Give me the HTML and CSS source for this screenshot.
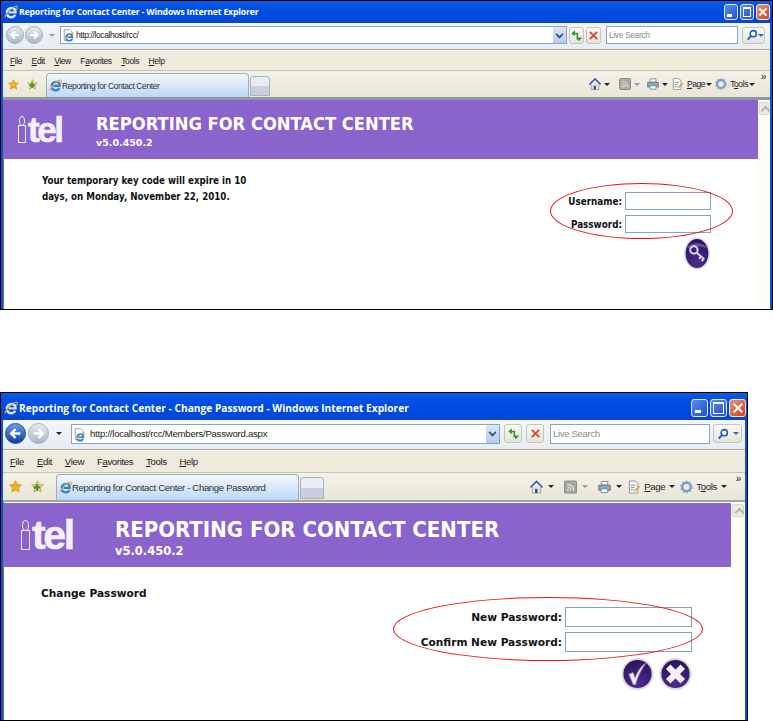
FILE: index.html
```html
<!DOCTYPE html>
<html lang="en">
<head>
    <meta charset="UTF-8">
    <meta name="viewport" content="width=device-width, initial-scale=1.0">
    <title>Reporting for Contact Center</title>
    <link rel="stylesheet" href="styles.css">
</head>
<body>
    <!-- shared icons -->
    <svg class="icon-defs" width="0" height="0">
        <defs>
            <radialGradient id="purple-ball" cx="0.5" cy="0.85" r="0.8">
                <stop offset="0" stop-color="#4d2c8c"/>
                <stop offset="1" stop-color="#2c1560"/>
            </radialGradient>
        </defs>
        <symbol id="i-ie" viewBox="0 0 16 16">
            <path d="M3.200 9.200C3.200 5.600 5.600 3.400 8.600 3.400 11.600 3.400 13.200 5.400 13.200 8.400H5.400M3.400 10.400C4 12.600 6 14 8.400 14 10.400 14 12 13 12.900 11.200" fill="none" stroke="currentColor" stroke-width="2.700"/>
            <path d="M1 14.200C2.800 9 9 2.400 13.600 1.400 15.600 1 15.800 3 14.400 5.400" fill="none" stroke="#e8a92c" stroke-width="1.300"/>
        </symbol>
        <symbol id="i-page" viewBox="0 0 12 14">
            <path d="M1.500 .5H8L11 3.500V13.500H1.500Z" fill="#fff" stroke="#8b97a6"/>
        </symbol>
        <symbol id="i-arrow-left" viewBox="0 0 20 20">
            <path d="M15 10H6M10 5.500 5.500 10 10 14.500" fill="none" stroke="#fff" stroke-width="2.600"/>
        </symbol>
        <symbol id="i-arrow-right" viewBox="0 0 20 20">
            <path d="M5 10H14M10 5.500 14.500 10 10 14.500" fill="none" stroke="#fff" stroke-width="2.600"/>
        </symbol>
        <symbol id="i-refresh" viewBox="0 0 16 16">
            <path d="M6 1.500 1.500 5.500 6 9V6.500H8V13H10V4.500H6ZM11 15 15 10.500H8Z" fill="#2f9a2f"/>
        </symbol>
        <symbol id="i-stop" viewBox="0 0 16 16">
            <path d="M3.500 3.500 12.500 12.500M12.500 3.500 3.500 12.500" fill="none" stroke="#d8483c" stroke-width="2.400"/>
        </symbol>
        <symbol id="i-search" viewBox="0 0 14 14">
            <circle cx="8.500" cy="5.500" r="3.600" fill="#fff" stroke="#1f55c8" stroke-width="1.800"/>
            <path d="M6 8 2 12.400" stroke="#1f55c8" stroke-width="2.200"/>
        </symbol>
        <symbol id="i-star" viewBox="0 0 14 14">
            <path d="M7 .8 8.900 4.900 13.300 5.400 10 8.400 10.900 12.900 7 10.600 3.100 12.900 4 8.400 .7 5.400 5.100 4.900Z" fill="#f6b21c" stroke="#c9800e" stroke-width=".7"/>
        </symbol>
        <symbol id="i-add" viewBox="0 0 14 14">
            <path d="M7 .8 8.900 4.900 13.300 5.400 10 8.400 10.900 12.900 7 10.600 3.100 12.900 4 8.400 .7 5.400 5.100 4.900Z" fill="#f3d67a" stroke="#b98b1c" stroke-width=".7"/>
            <path d="M3 8H10M6.500 4.500V11.500" stroke="#2f9a2f" stroke-width="2.400"/>
        </symbol>
        <symbol id="i-home" viewBox="0 0 14 14">
            <path d="M2.500 7V13.500H11.500V7" fill="#e8e4d8" stroke="#8a8f98" stroke-width=".8"/>
            <path d="M.5 7.500 7 1 13.500 7.500" fill="none" stroke="#2f5fb8" stroke-width="1.800"/>
            <path d="M5.500 9H8V13.500H5.500Z" fill="#234a94"/>
        </symbol>
        <symbol id="i-rss" viewBox="0 0 12 12">
            <rect x=".5" y=".5" width="11" height="11" rx="1" fill="#a9a9a4" stroke="#8e8e88"/>
            <path d="M3 3.500A5.500 5.500 0 0 1 8.800 9.200M3 6A3 3 0 0 1 6.200 9.200" fill="none" stroke="#ddd" stroke-width="1.100"/>
            <circle cx="3.600" cy="8.600" r="1" fill="#ddd"/>
        </symbol>
        <symbol id="i-print" viewBox="0 0 14 14">
            <path d="M3.500 1H10.500V5H3.500Z" fill="#f2f2f2" stroke="#7d8794"/>
            <path d="M.8 5H13.200V10.500H.8Z" fill="#9aa4b0" stroke="#68727e"/>
            <path d="M3.500 9H10.500V13H3.500Z" fill="#fff" stroke="#3f9aa8"/>
        </symbol>
        <symbol id="i-doc" viewBox="0 0 14 14">
            <path d="M1.500 .5H8L10.500 3V13.500H1.500Z" fill="#f7f7f2" stroke="#8c96a2"/>
            <path d="M3 5H8M3 7.500H7M3 10H6" stroke="#7b8ea8"/>
            <path d="M7 11.500 12.500 6" stroke="#d9a021" stroke-width="1.600"/>
        </symbol>
        <symbol id="i-gear" viewBox="0 0 14 14">
            <circle cx="7" cy="7" r="4.600" fill="none" stroke="#7d9cc0" stroke-width="2.600"/>
            <circle cx="7" cy="7" r="6" fill="none" stroke="#92a9c4" stroke-width="1.600" stroke-dasharray="2 1.800"/>
            <circle cx="7" cy="7" r="2.200" fill="#e7edf4"/>
        </symbol>
        <symbol id="i-key" viewBox="0 0 26 32">
            <ellipse cx="13" cy="16" rx="12.500" ry="15.500" fill="#d9d9dc"/>
            <ellipse cx="13" cy="16" rx="11" ry="14" fill="url(#purple-ball)"/>
            <path d="M3.500 11C6 4.500 20 4.500 22.500 11 17 8.500 9 8.500 3.500 11Z" fill="#6a51a0"/>
            <circle cx="10" cy="12.500" r="3.600" fill="none" stroke="#d8cfea" stroke-width="2"/>
            <path d="M12.500 15 20 21.500M17 19 15 21M19.500 21 17.500 23.500" fill="none" stroke="#d8cfea" stroke-width="2"/>
        </symbol>
        <symbol id="i-check" viewBox="0 0 34 34">
            <circle cx="17" cy="17" r="16.500" fill="#d9d9dc"/>
            <circle cx="17" cy="17" r="14.500" fill="url(#purple-ball)"/>
            <path d="M8 17 12.500 15.500 14.500 21C17 14 21 8.500 26 5.500 21 12 17 20 15 28H12.500Z" fill="#efeaf7" stroke="#8c75b8" stroke-width=".8"/>
        </symbol>
        <symbol id="i-cross" viewBox="0 0 34 34">
            <circle cx="17" cy="17" r="16.500" fill="#d9d9dc"/>
            <circle cx="17" cy="17" r="14.500" fill="url(#purple-ball)"/>
            <path d="M9.500 9.500 24.500 24.500M24.500 9.500 9.500 24.500" stroke="#f2eff8" stroke-width="6.500"/>
        </symbol>
    </svg>

    <section class="browser browser-login">
        <div class="titlebar">
            <svg class="title-icon"><use href="#i-ie"/></svg>
            <span class="title-text">Reporting for Contact Center - Windows Internet Explorer</span>
            <div class="win-buttons">
                <span class="win-btn win-min"></span>
                <span class="win-btn win-max"></span>
                <span class="win-btn win-close"></span>
            </div>
        </div>
        <div class="addressbar">
            <div class="nav-buttons">
                <span class="nav-ball nav-off"><svg><use href="#i-arrow-left"/></svg></span>
                <span class="nav-ball nav-off"><svg><use href="#i-arrow-right"/></svg></span>
                <span class="caret caret-grey"></span>
            </div>
            <div class="url-box">
                <svg class="url-icon"><use href="#i-page"/></svg>
                <svg class="url-ie"><use href="#i-ie"/></svg>
                <span class="url-text">http://localhost/rcc/</span>
                <span class="url-drop"></span>
            </div>
            <span class="tool-btn"><svg><use href="#i-refresh"/></svg></span>
            <span class="tool-btn"><svg><use href="#i-stop"/></svg></span>
            <div class="search-box">Live Search</div>
            <span class="search-btn"><svg><use href="#i-search"/></svg><span class="caret caret-blue"></span></span>
        </div>
        <nav class="menubar">
            <span><u>F</u>ile</span><span><u>E</u>dit</span><span><u>V</u>iew</span><span>F<u>a</u>vorites</span><span><u>T</u>ools</span><span><u>H</u>elp</span>
        </nav>
        <div class="tabbar">
            <svg class="fav-icon"><use href="#i-star"/></svg>
            <svg class="fav-icon fav-add"><use href="#i-add"/></svg>
            <div class="tab">
                <svg class="tab-icon"><use href="#i-ie"/></svg>
                <span>Reporting for Contact Center</span>
            </div>
            <span class="tab-new"></span>
            <div class="commands">
                <svg><use href="#i-home"/></svg><span class="caret"></span>
                <svg><use href="#i-rss"/></svg><span class="caret caret-grey"></span>
                <svg><use href="#i-print"/></svg><span class="caret"></span>
                <svg><use href="#i-doc"/></svg><span class="cmd-label"><u>P</u>age</span><span class="caret"></span>
                <svg><use href="#i-gear"/></svg><span class="cmd-label">T<u>o</u>ols</span><span class="caret"></span>
                <span class="chevron">»</span>
            </div>
        </div>
        <div class="viewport">
            <div class="page">
                <header class="banner">
                    <div class="logo"><span class="logo-i"></span><span class="logo-tel">tel</span></div>
                    <div class="banner-text">
                        <h1>REPORTING FOR CONTACT CENTER</h1>
                        <p>v5.0.450.2</p>
                    </div>
                </header>
                <div class="page-body">
                    <p class="message">Your temporary key code will expire in 10<br>days, on Monday, November 22, 2010.</p>
                    <form class="form">
                        <span class="ring"></span>
                        <div class="field"><label>Username:</label><span class="input"></span></div>
                        <div class="field"><label>Password:</label><span class="input"></span></div>
                        <div class="actions">
                            <svg class="round-btn key-btn"><use href="#i-key"/></svg>
                        </div>
                    </form>
                </div>
            </div>
            <div class="scrollbar"><span class="scroll-up"></span></div>
        </div>
    </section>

    <section class="browser browser-change">
        <div class="titlebar">
            <svg class="title-icon"><use href="#i-ie"/></svg>
            <span class="title-text">Reporting for Contact Center - Change Password - Windows Internet Explorer</span>
            <div class="win-buttons">
                <span class="win-btn win-min"></span>
                <span class="win-btn win-max"></span>
                <span class="win-btn win-close"></span>
            </div>
        </div>
        <div class="addressbar">
            <div class="nav-buttons">
                <span class="nav-ball nav-on"><svg><use href="#i-arrow-left"/></svg></span>
                <span class="nav-ball nav-off"><svg><use href="#i-arrow-right"/></svg></span>
                <span class="caret"></span>
            </div>
            <div class="url-box">
                <svg class="url-icon"><use href="#i-page"/></svg>
                <svg class="url-ie"><use href="#i-ie"/></svg>
                <span class="url-text">http://localhost/rcc/Members/Password.aspx</span>
                <span class="url-drop"></span>
            </div>
            <span class="tool-btn"><svg><use href="#i-refresh"/></svg></span>
            <span class="tool-btn"><svg><use href="#i-stop"/></svg></span>
            <div class="search-box">Live Search</div>
            <span class="search-btn"><svg><use href="#i-search"/></svg><span class="caret caret-blue"></span></span>
        </div>
        <nav class="menubar">
            <span><u>F</u>ile</span><span><u>E</u>dit</span><span><u>V</u>iew</span><span>F<u>a</u>vorites</span><span><u>T</u>ools</span><span><u>H</u>elp</span>
        </nav>
        <div class="tabbar">
            <svg class="fav-icon"><use href="#i-star"/></svg>
            <svg class="fav-icon fav-add"><use href="#i-add"/></svg>
            <div class="tab">
                <svg class="tab-icon"><use href="#i-ie"/></svg>
                <span>Reporting for Contact Center - Change Password</span>
            </div>
            <span class="tab-new"></span>
            <div class="commands">
                <svg><use href="#i-home"/></svg><span class="caret"></span>
                <svg><use href="#i-rss"/></svg><span class="caret caret-grey"></span>
                <svg><use href="#i-print"/></svg><span class="caret"></span>
                <svg><use href="#i-doc"/></svg><span class="cmd-label"><u>P</u>age</span><span class="caret"></span>
                <svg><use href="#i-gear"/></svg><span class="cmd-label">T<u>o</u>ols</span><span class="caret"></span>
                <span class="chevron">»</span>
            </div>
        </div>
        <div class="viewport">
            <div class="page">
                <header class="banner">
                    <div class="logo"><span class="logo-i"></span><span class="logo-tel">tel</span></div>
                    <div class="banner-text">
                        <h1>REPORTING FOR CONTACT CENTER</h1>
                        <p>v5.0.450.2</p>
                    </div>
                </header>
                <div class="page-body">
                    <p class="message">Change Password</p>
                    <form class="form">
                        <span class="ring"></span>
                        <div class="field"><label>New Password:</label><span class="input"></span></div>
                        <div class="field"><label>Confirm New Password:</label><span class="input"></span></div>
                        <div class="actions">
                            <svg class="round-btn"><use href="#i-check"/></svg>
                            <svg class="round-btn"><use href="#i-cross"/></svg>
                        </div>
                    </form>
                </div>
            </div>
            <div class="scrollbar"><span class="scroll-up"></span></div>
        </div>
    </section>
</body>
</html>
```

FILE: styles.css
```css
/* Base Styles */
* {
    margin: 0;
    padding: 0;
    box-sizing: border-box;
}

body {
    background: #fff;
    color: #111;
    font-family: "DejaVu Sans", sans-serif;
    overflow: hidden;
}

.icon-defs {
    position: absolute;
}

svg {
    display: block;
    flex: none;
    color: #2f7fd6;
}

/* Window frame, sizes differ per screenshot */
.browser {
    display: flex;
    flex-direction: column;
    border: 1px solid #000;
    background: #0a52dc;
    --edge: 2px;
}

.browser-login {
    width: 773px;
    height: 310px;
    margin-bottom: 82px;
    --title-h: 22px;
    --address-h: 27px;
    --menu-h: 21px;
    --tab-h: 29px;
    --ui-font: 8.5px;
    --ui-track: -.4px;
}

.browser-change {
    width: 748px;
    height: 329px;
    --title-h: 27px;
    --address-h: 30px;
    --menu-h: 23px;
    --tab-h: 29px;
    --ui-font: 9.6px;
    --ui-track: -.35px;
}

/* Title bar */
.titlebar {
    height: var(--title-h);
    display: flex;
    align-items: center;
    color: #fff;
    font-family: "Open Sans", sans-serif;
    font-weight: 700;
    white-space: nowrap;
    background: linear-gradient(180deg, #0b5fe0, #0150e6 25%, #0048dc 80%, #0a46c4);
}

.browser-login .titlebar {
    font-size: 8.7px;
    letter-spacing: -.17px;
    padding: 0 2px 0 3px;
}

.browser-change .titlebar {
    font-size: 10.2px;
    padding: 2px 1px 0 3px;
}

.title-icon {
    width: 14px;
    height: 14px;
    margin-right: 1px;
    color: #cfe6ff;
}

.win-buttons {
    display: flex;
    gap: 2px;
    margin-left: auto;
}

.win-btn {
    position: relative;
    display: block;
    border: 1px solid #dfe8fb;
    border-radius: 3px;
    background: linear-gradient(135deg, #5b8cf0, #2350c8);
}

.browser-login .win-btn {
    width: 14px;
    height: 16px;
}

.browser-change .win-btn {
    width: 17px;
    height: 18px;
}

.win-min::after {
    content: "";
    position: absolute;
    left: 20%;
    bottom: 15%;
    width: 38%;
    height: 3px;
    background: #fff;
}

.win-max::after {
    content: "";
    position: absolute;
    inset: 2px;
    border: 1px solid #fff;
    border-top-width: 2px;
}

.win-close {
    background: linear-gradient(135deg, #ec9478, #d2401a);
}

.win-close::before,
.win-close::after {
    content: "";
    position: absolute;
    left: 10%;
    right: 10%;
    top: 44%;
    height: 2px;
    background: #fff;
    transform: rotate(45deg);
}

.win-close::after {
    transform: rotate(-45deg);
}

/* Address row */
.addressbar {
    height: var(--address-h);
    display: flex;
    align-items: center;
    margin: 0 var(--edge);
    border-bottom: 1px solid #a8a99c;
    background: linear-gradient(180deg, #f2f5fa, #e8edf3);
}

.browser-login .addressbar {
    padding: 0 3px 2px 3px;
}

.browser-change .addressbar {
    padding: 0 2px 2px 2px;
}

.nav-buttons {
    display: flex;
    align-items: center;
}

.nav-ball {
    display: block;
    border-radius: 50%;
    border: 1px solid #a7b0bd;
}

.nav-ball svg {
    width: 100%;
    height: 100%;
}

.nav-on {
    background: linear-gradient(180deg, #6f9be6, #0f3f9c);
    border-color: #1d4d9f;
}

.nav-off {
    background: linear-gradient(180deg, #e6ebf2, #a9b6c8);
}

.browser-login .nav-ball {
    width: 18px;
    height: 18px;
}

.browser-login .nav-buttons {
    gap: 1px;
    width: 54px;
}

.browser-change .nav-ball {
    width: 21px;
    height: 21px;
}

.browser-change .nav-buttons {
    gap: 2px;
    width: 66px;
}

.nav-buttons .caret {
    margin-left: 5px;
}

.caret {
    display: block;
    width: 0;
    height: 0;
    border: 3px solid transparent;
    border-top: 3px solid #222;
    border-bottom: 0;
    flex: none;
}

.caret-grey {
    border-top-color: #9a9a9a;
}

.caret-blue {
    border-top-color: #2c62c8;
}

.url-box,
.search-box,
.menubar,
.tabbar {
    font-family: "Liberation Sans", sans-serif;
    font-size: var(--ui-font);
    letter-spacing: var(--ui-track);
}

.url-box,
.search-box {
    display: flex;
    align-items: center;
    border: 1px solid #8aa4bf;
    background: #fff;
}

.url-box {
    position: relative;
    color: #222;
}

.browser-login .url-box {
    width: 507px;
    height: 18px;
    padding-left: 2px;
}

.browser-change .url-box {
    width: 429px;
    height: 20px;
    padding-left: 2px;
    letter-spacing: -.25px;
}

.url-icon {
    width: 10px;
    height: 12px;
}

.url-ie {
    position: absolute;
    left: 3px;
    bottom: 1px;
    width: 10px;
    height: 10px;
}

.url-text {
    margin-left: 3px;
}

.browser-change .url-text {
    margin-left: 6px;
}

.url-drop {
    position: relative;
    margin-left: auto;
    width: 13px;
    height: 100%;
    background: linear-gradient(180deg, #dbe6f8, #b5cbee);
}

.url-drop::after {
    content: "";
    position: absolute;
    left: 3px;
    top: 4px;
    width: 5px;
    height: 5px;
    border-right: 2px solid #3b4d6a;
    border-bottom: 2px solid #3b4d6a;
    transform: rotate(45deg) scale(.8);
}

.tool-btn {
    display: flex;
    align-items: center;
    justify-content: center;
    border: 1px solid #c6c6b8;
    border-radius: 3px;
    background: linear-gradient(180deg, #fafaf5, #e4e4da);
}

.tool-btn svg {
    width: 13px;
    height: 13px;
}

.browser-login .tool-btn {
    width: 15px;
    height: 17px;
    margin-left: 2px;
}

.browser-change .tool-btn {
    width: 18px;
    height: 19px;
    margin-left: 4px;
}

.search-box {
    color: #8c8c8c;
    padding-left: 2px;
}

.browser-login .search-box {
    width: 132px;
    height: 18px;
    margin-left: 5px;
}

.browser-change .search-box {
    width: 160px;
    height: 20px;
    margin-left: 6px;
}

.search-btn {
    display: flex;
    align-items: center;
    justify-content: space-between;
    padding: 0 2px 0 3px;
    border: 1px solid #c6c6b8;
    border-radius: 3px;
    background: linear-gradient(180deg, #fafaf5, #e4e4da);
}

.search-btn svg {
    width: 12px;
    height: 12px;
}

.browser-login .search-btn {
    width: 23px;
    height: 17px;
    margin-left: 4px;
}

.browser-change .search-btn {
    width: 29px;
    height: 19px;
    margin-left: 3px;
}

/* Menu row */
.menubar {
    height: var(--menu-h);
    display: flex;
    align-items: center;
    margin: 0 var(--edge);
    border-top: 1px solid #f7f6ee;
    border-bottom: 1px solid #c4c3b4;
    background: #eeebdd;
    color: #222;
}

.browser-login .menubar {
    padding-left: 7px;
    gap: 9.5px;
}

.browser-change .menubar {
    padding-left: 7px;
    gap: 12.8px;
}

/* Tab row */
.tabbar {
    height: var(--tab-h);
    display: flex;
    align-items: flex-end;
    margin: 0 var(--edge);
    background: linear-gradient(180deg, #f4f2e8, #e9e6d7);
    color: #333;
    white-space: nowrap;
}

.browser-login .tabbar {
    border-bottom: 3px solid #8f99a6;
}

.browser-change .tabbar {
    border-bottom: 2px solid #9aa5b2;
}

.fav-icon {
    align-self: center;
}

.browser-login .fav-icon {
    width: 11px;
    height: 11px;
    margin-left: 5px;
}

.browser-login .fav-icon.fav-add {
    margin: 0 8px;
}

.browser-change .fav-icon {
    width: 13px;
    height: 13px;
    margin-left: 6px;
}

.browser-change .fav-icon.fav-add {
    margin: 0 12px 0 9px;
}

.tab {
    display: flex;
    align-items: center;
    border: 1px solid #a3adb8;
    border-bottom: 0;
    border-radius: 4px 4px 0 0;
    background: linear-gradient(180deg, #f4f8fd, #bcd8f7);
}

.tab-icon {
    width: 13px;
    height: 13px;
    margin: 0 0 0 2px;
}

.browser-login .tab {
    width: 203px;
    height: 24px;
}

.browser-change .tab {
    width: 243px;
    height: 26px;
}

.tab-new {
    display: block;
    margin-left: 1px;
    margin-bottom: 1px;
    border: 1px solid #aab2bd;
    border-radius: 3px 3px 0 0;
    background: linear-gradient(180deg, #e8ecf5 50%, #c9cfe0 50%);
}

.browser-login .tab-new {
    width: 20px;
    height: 20px;
}

.browser-change .tab-new {
    width: 24px;
    height: 22px;
}

/* Command buttons, gaps are not even in IE7 */
.commands {
    align-self: center;
    position: relative;
    display: flex;
    align-items: center;
    margin-left: auto;
    color: #222;
}

.browser-login .commands {
    gap: 3px;
    padding-right: 15px;
}

.browser-login .commands svg {
    width: 12px;
    height: 12px;
}

.browser-login .commands svg:nth-of-type(2) {
    margin-left: 6px;
}

.browser-login .commands svg:nth-of-type(3) {
    margin-left: 4px;
}

.browser-login .commands svg:nth-of-type(4) {
    margin-left: 1px;
}

.browser-login .commands .cmd-label + .caret {
    margin-left: -2px;
}

.browser-change .commands {
    gap: 5px;
    padding-right: 18px;
}

.browser-change .commands svg {
    width: 13px;
    height: 14px;
}

.browser-change .commands svg:nth-of-type(2),
.browser-change .commands svg:nth-of-type(3) {
    margin-left: 5px;
}

.browser-change .commands svg:nth-of-type(4) {
    margin-left: 1px;
}

.browser-change .commands .cmd-label {
    margin-left: -2px;
}

.browser-change .commands .cmd-label + .caret {
    margin-left: -1px;
}

.chevron {
    position: absolute;
    right: 4px;
    top: -6px;
    font-size: 10px;
    line-height: 10px;
}

/* Page area */
.viewport {
    flex: 1;
    min-height: 0;
    display: flex;
    margin: 0 var(--edge);
    background: #fff;
}

.page {
    flex: 1;
    display: flex;
    flex-direction: column;
    border-left: 1px solid #777;
}

.banner {
    display: flex;
    background: #8a63cd;
    color: #fff;
}

.browser-login .banner {
    height: 59px;
}

.browser-change .banner {
    height: 64px;
    margin-top: 1px;
}

.logo {
    display: flex;
    align-items: flex-end;
    font-family: "Liberation Sans", sans-serif;
    font-weight: 700;
}

.browser-login .logo {
    width: 92px;
    padding: 0 0 16px 14px;
}

.browser-change .logo {
    width: 111px;
    padding: 0 0 17px 17px;
}

.logo-i {
    position: relative;
    display: block;
    flex: none;
    border: 1px solid #eee;
    margin-right: 2px;
}

.logo-i::before {
    content: "";
    position: absolute;
    left: 0;
    right: 0;
    border: 1px solid #eee;
    border-radius: 50%;
}

.browser-login .logo-i {
    width: 8px;
    height: 18px;
}

.browser-login .logo-i::before {
    height: 8px;
    top: -10px;
}

.browser-change .logo-i {
    width: 9px;
    height: 20px;
}

.browser-change .logo-i::before {
    height: 9px;
    top: -11px;
}

.logo-tel {
    color: #f4f0fb;
    -webkit-text-stroke: .6px #f4f0fb;
    line-height: .74;
}

.browser-login .logo-tel {
    font-size: 35px;
    letter-spacing: -2.4px;
}

.browser-change .logo-tel {
    font-size: 41px;
    letter-spacing: -2.4px;
}

.banner-text h1 {
    font-family: "DejaVu Sans Condensed", "DejaVu Sans", sans-serif;
    font-stretch: condensed;
    font-weight: 700;
    white-space: nowrap;
    line-height: 1;
}

.banner-text p {
    font-weight: 700;
}

.browser-login .banner-text {
    padding-top: 15px;
}

.browser-login .banner-text h1 {
    font-size: 18.2px;
}

.browser-login .banner-text p {
    font-size: 9.5px;
    margin-top: 4px;
}

.browser-change .banner-text {
    padding-top: 16px;
}

.browser-change .banner-text h1 {
    font-size: 22px;
}

.browser-change .banner-text p {
    font-size: 11.5px;
    margin-top: 3px;
}

.page-body {
    flex: 1;
    display: flex;
    justify-content: space-between;
}

.message {
    font-weight: 700;
    line-height: 16px;
    white-space: nowrap;
}

.browser-login .message {
    font-family: "DejaVu Sans Condensed", "DejaVu Sans", sans-serif;
    font-stretch: condensed;
    font-size: 9.7px;
    padding: 14px 0 0 38px;
}

.browser-change .message {
    font-size: 10.6px;
    padding: 18px 0 0 37px;
}

.form {
    position: relative;
    display: flex;
    flex-direction: column;
    align-items: flex-end;
}

.browser-login .form {
    gap: 5px;
    padding: 33px 47px 0 0;
}

.browser-change .form {
    gap: 5px;
    padding: 40px 39px 0 0;
}

.field {
    display: flex;
    align-items: center;
    gap: 3px;
    font-weight: 700;
}

.browser-login .field {
    font-family: "DejaVu Sans Condensed", "DejaVu Sans", sans-serif;
    font-stretch: condensed;
    font-size: 9.8px;
}

.browser-change .field {
    font-size: 10.6px;
}

.input {
    display: block;
    border: 1px solid #8aa3bd;
    background: #fff;
}

.browser-login .input {
    width: 86px;
    height: 18px;
}

.browser-change .input {
    width: 127px;
    height: 20px;
}

.actions {
    display: flex;
    justify-content: flex-end;
}

.browser-login .actions {
    margin-top: -1px;
}

.browser-change .actions {
    gap: 5px;
}

.round-btn {
    width: 33px;
    height: 34px;
}

.round-btn.key-btn {
    width: 28px;
    height: 33px;
}

/* Hand drawn mark over the fields */
.ring {
    position: absolute;
    border: 1px solid #ee1111;
    border-radius: 50%;
}

.browser-login .ring {
    right: 25px;
    top: 24px;
    width: 183px;
    height: 56px;
}

.browser-change .ring {
    right: 28px;
    top: 30px;
    width: 310px;
    height: 64px;
}

/* Scrollbar */
.scrollbar {
    flex: none;
    background: #fdfdf8;
    padding: 2px 1px 0;
}

.browser-login .scrollbar {
    width: 12px;
}

.browser-change .scrollbar {
    width: 14px;
}

.scroll-up {
    position: relative;
    display: block;
    height: 13px;
    border: 1px solid #d6d6cc;
    border-radius: 2px;
    background: #ecece4;
}

.scroll-up::after {
    content: "";
    position: absolute;
    left: 50%;
    top: 4px;
    width: 5px;
    height: 5px;
    margin-left: -2.5px;
    border-left: 2px solid #b5b5ad;
    border-top: 2px solid #b5b5ad;
    transform: rotate(45deg);
}
```
